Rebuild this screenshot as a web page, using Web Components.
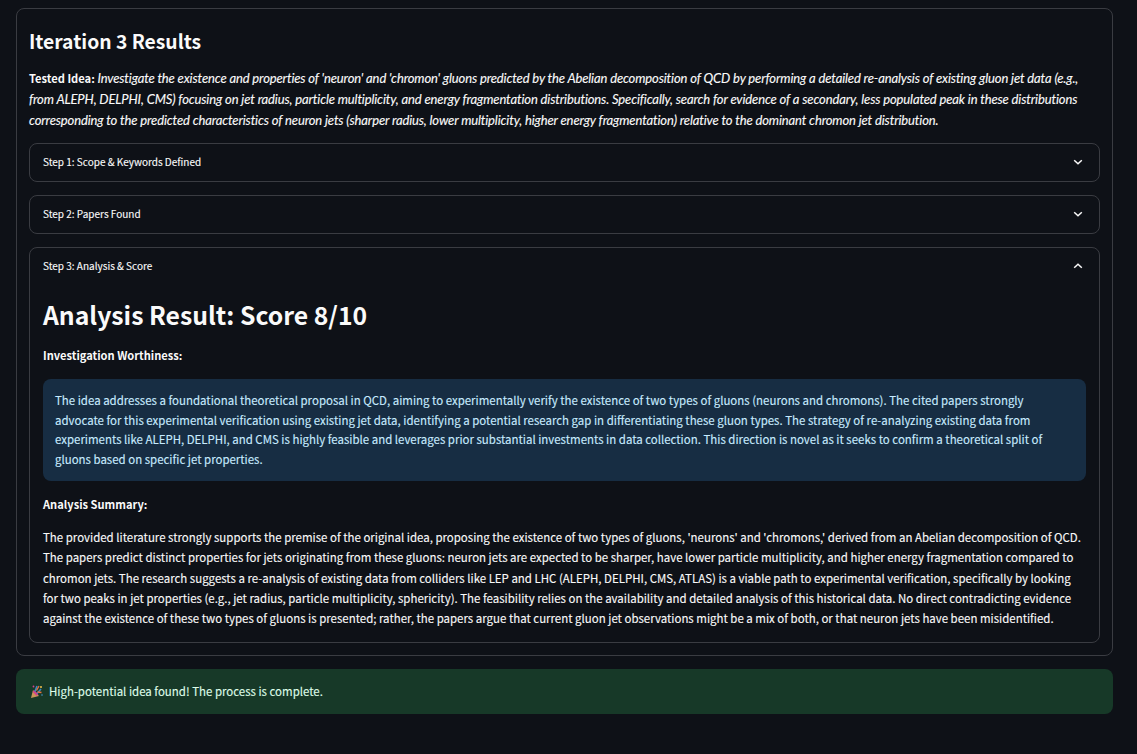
<!DOCTYPE html>
<html lang="en"><head><meta charset="utf-8"><title>Iteration 3 Results</title>
<style>
html,body{margin:0;background:#0e1117;}
body{font-family:"Noto Sans CJK SC","Noto Sans",sans-serif;color:#fafafa;font-size:11.46px;padding:8px 24px 0 16px;-webkit-text-stroke:.12px currentColor;}
</style></head><body>
<result-card>
  <h-title>Iteration 3 Results</h-title>
  <idea-text><b>Tested Idea:</b> <i>Investigate the existence and properties of 'neuron' and 'chromon' gluons predicted by the Abelian decomposition of QCD by performing a detailed re-analysis of existing gluon jet data (e.g., from ALEPH, DELPHI, CMS) focusing on jet radius, particle multiplicity, and energy fragmentation distributions. Specifically, search for evidence of a secondary, less populated peak in these distributions corresponding to the predicted characteristics of neuron jets (sharper radius, lower multiplicity, higher energy fragmentation) relative to the dominant chromon jet distribution.</i></idea-text>
  <step-expander label="Step 1: Scope &amp; Keywords Defined"></step-expander>
  <step-expander label="Step 2: Papers Found"></step-expander>
  <step-expander label="Step 3: Analysis &amp; Score" open>
    <score-title>Analysis Result: Score 8/10</score-title>
    <sub-label>Investigation Worthiness:</sub-label>
    <info-box>The idea addresses a foundational theoretical proposal in QCD, aiming to experimentally verify the existence of two types of gluons (neurons and chromons). The cited papers strongly advocate for this experimental verification using existing jet data, identifying a potential research gap in differentiating these gluon types. The strategy of re-analyzing existing data from experiments like ALEPH, DELPHI, and CMS is highly feasible and leverages prior substantial investments in data collection. This direction is novel as it seeks to confirm a theoretical split of gluons based on specific jet properties.</info-box>
    <sub-label>Analysis Summary:</sub-label>
    <body-text>The provided literature strongly supports the premise of the original idea, proposing the existence of two types of gluons, 'neurons' and 'chromons,' derived from an Abelian decomposition of QCD. The papers predict distinct properties for jets originating from these gluons: neuron jets are expected to be sharper, have lower particle multiplicity, and higher energy fragmentation compared to chromon jets. The research suggests a re-analysis of existing data from colliders like LEP and LHC (ALEPH, DELPHI, CMS, ATLAS) is a viable path to experimental verification, specifically by looking for two peaks in jet properties (e.g., jet radius, particle multiplicity, sphericity). The feasibility relies on the availability and detailed analysis of this historical data. No direct contradicting evidence against the existence of these two types of gluons is presented; rather, the papers argue that current gluon jet observations might be a mix of both, or that neuron jets have been misidentified.</body-text>
  </step-expander>
</result-card>
<success-box>High-potential idea found! The process is complete.</success-box>
<script>
function def(name, css, html){
  customElements.define(name, class extends HTMLElement{
    constructor(){super();const r=this.attachShadow({mode:'open'});r.innerHTML='<style>'+css+'</style>'+html;}
  });
}
def('result-card',':host{display:block;border:1px solid #3a3c42;border-radius:8px;padding:13px 12px 12px 12px;box-sizing:border-box}','<slot></slot>');
def('h-title',':host{display:block;font-size:19.3px;font-weight:700;line-height:40px;margin-bottom:6px;margin-top:-1px;padding-bottom:1px;-webkit-text-stroke:0}','<slot></slot>');
def('idea-text',':host{display:block;line-height:21px;margin-bottom:-1px}::slotted(b){font-size:11.15px;-webkit-text-stroke:0}::slotted(i){font-family:Lato,sans-serif;font-size:13px;letter-spacing:-.13px}','<slot></slot>');
def('score-title',':host{display:block;font-size:24.75px;font-weight:700;line-height:40px;margin:-1px 0 11px;-webkit-text-stroke:0}','<slot></slot>');
def('sub-label',':host{display:block;font-weight:700;font-size:11.1px;line-height:20px;-webkit-text-stroke:0}','<slot></slot>');
def('info-box',':host{display:block;background:#172d43;color:#c7ebff;border-radius:8px;padding:12px;margin:14px 0 13px;line-height:19.5px}','<slot></slot>');
def('body-text',':host{display:block;margin-top:13px;line-height:20.25px}','<slot></slot>');
customElements.define('step-expander', class extends HTMLElement{
  constructor(){super();
    const r=this.attachShadow({mode:'open'});
    const open=this.hasAttribute('open');
    const path=open?'M4.200 9.800 8 6.200l3.800 3.600':'M4.200 6.200 8 9.800l3.800-3.600';
    r.innerHTML=`<style>
      :host{display:block;border:1px solid #3a3c42;border-radius:8px;margin-top:13px;box-sizing:border-box}
      .head{display:flex;align-items:center;justify-content:space-between;height:37px;padding:0 13px 2px;box-sizing:border-box;font-size:10px;line-height:16px}
      svg{width:16px;height:16px;fill:none;stroke:#fafafa;stroke-width:1.5}
      .body{padding:10px 13px 14px}
    </style><div class="head"><span></span><svg viewBox="0 0 16 16"><path d="${path}"/></svg></div>${open?'<div class="body"><slot></slot></div>':''}`;
    r.querySelector('span').textContent=this.getAttribute('label');
  }
});
customElements.define('success-box', class extends HTMLElement{
  constructor(){super();
    const r=this.attachShadow({mode:'open'});
    r.innerHTML=`<style>
      :host{display:flex;align-items:center;gap:6px;margin-top:13px;height:45px;box-sizing:border-box;background:#173928;color:#dffde9;border-radius:8px;padding:0 14px 1px;font-size:11.46px}
      svg{width:13px;height:15px;flex:none}
    </style><svg viewBox="0 0 13 15"><path d="M1 14 3 6l6 6z" fill="#c9945a"/><path d="M3.500 7 7.500 11" stroke="#d43f8d" stroke-width="2.400"/><path d="M5 7.500 7 2M7 9.500 11 5" stroke="#3b88c3" stroke-width="1.600" fill="none"/><path d="M6.500 6.500 9 2M7.500 8 11.500 8.500" stroke="#e8703a" stroke-width="1.300"/><circle cx="11" cy="3" r="1" fill="#f3c04a"/><circle cx="3.500" cy="2.500" r=".9" fill="#d43f8d"/><circle cx="12" cy="11" r=".7" fill="#55acee"/></svg><span><slot></slot></span>`;
  }
});
</script>
</body></html>
